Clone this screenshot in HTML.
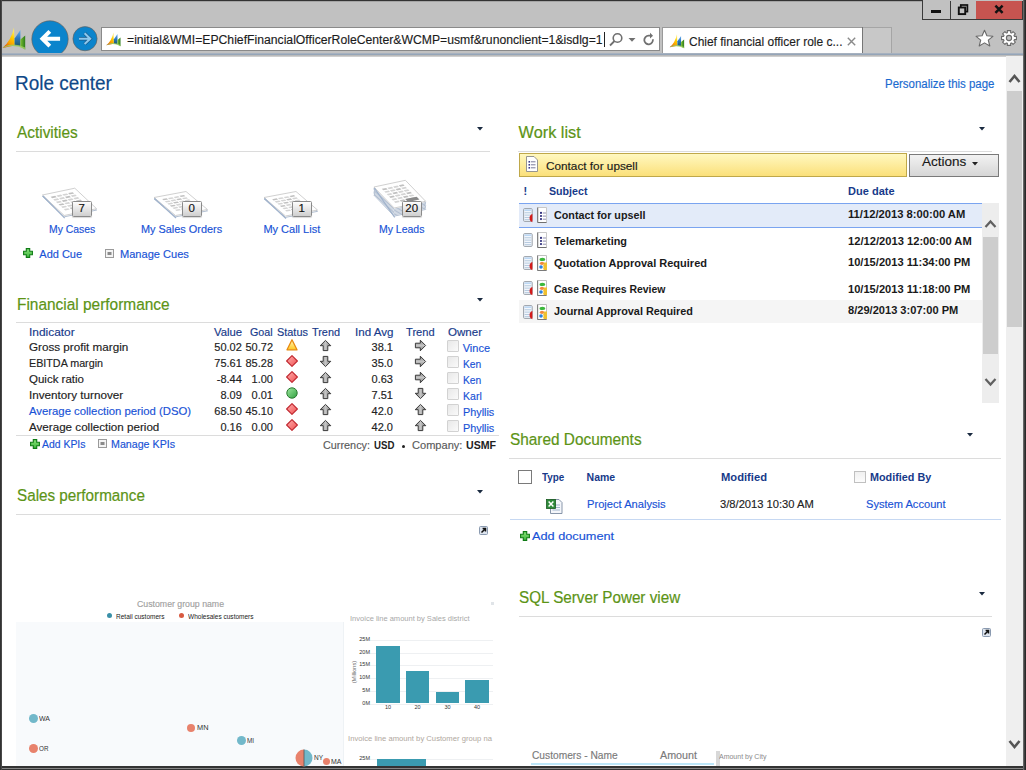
<!DOCTYPE html><html><head><meta charset="utf-8"><style>
html,body{margin:0;padding:0;width:1026px;height:770px;overflow:hidden;background:#fff;font-family:"Liberation Sans",sans-serif;}
.r{position:absolute;}
.t{position:absolute;white-space:nowrap;transform-origin:0 0;}
svg.r{overflow:visible}
</style></head><body>
<div class="r" style="left:0px;top:0px;width:1026px;height:56px;background:#c1c1c1"></div>
<div class="r" style="left:0px;top:0px;width:1026px;height:1px;background:#333"></div>
<div class="r" style="left:0px;top:1px;width:1026px;height:1px;background:#8a8a8a;opacity:0.5"></div>
<div class="r" style="left:0px;top:0px;width:2px;height:770px;background:#3a3a3a"></div>
<div class="r" style="left:1023px;top:0px;width:3px;height:770px;background:linear-gradient(90deg,#7a7a7a,#333 60%,#222)"></div>
<div class="r" style="left:0px;top:766px;width:1026px;height:4px;background:#333"></div>
<div class="r" style="left:0px;top:768px;width:1026px;height:1px;background:#858585"></div>
<div class="r" style="left:922px;top:0px;width:101px;height:20px;background:#c1c1c1;border:1px solid #3a3a3a;border-top:none;border-right:none;box-sizing:border-box"></div>
<div class="r" style="left:976px;top:1px;width:47px;height:19px;background:#c75450;border-bottom:1px solid #3a3a3a;box-sizing:border-box"></div>
<div class="r" style="left:950px;top:1px;width:1px;height:19px;background:#3a3a3a"></div>
<div class="r" style="left:1022px;top:1px;width:1px;height:19px;background:#3a3a3a"></div>
<div class="r" style="left:931px;top:10px;width:10px;height:3px;background:#111"></div>
<svg class="r" style="left:955px;top:2px" width="16" height="14" viewBox="0 0 16 14"><rect x="5.8" y="3" width="6.6" height="6.6" fill="none" stroke="#111" stroke-width="1.7"/><rect x="3.8" y="5.5" width="6.4" height="6.6" fill="#c1c1c1" stroke="#111" stroke-width="1.9"/><rect x="5.6" y="7.3" width="2.8" height="3" fill="#c1c1c1"/></svg>
<svg class="r" style="left:992px;top:3px" width="14" height="12" viewBox="0 0 14 12"><path d="M3.4 2.6 L10.6 9.8 M10.6 2.6 L3.4 9.8" stroke="#111" stroke-width="2.5"/></svg>
<svg class="r" style="left:2px;top:27px" width="24" height="22" viewBox="0 0 24 22"><defs><linearGradient id="gya" x1="0" y1="1" x2="0.5" y2="0"><stop offset="0" stop-color="#d42a10"/><stop offset="0.4" stop-color="#f89a00"/><stop offset="0.75" stop-color="#ffd000"/><stop offset="1" stop-color="#ffe860"/></linearGradient>
<linearGradient id="gba" x1="0" y1="1" x2="0" y2="0"><stop offset="0" stop-color="#1e5a68"/><stop offset="0.5" stop-color="#2a78c0"/><stop offset="1" stop-color="#6ab0f0"/></linearGradient>
<linearGradient id="gga" x1="0" y1="0" x2="1" y2="0"><stop offset="0" stop-color="#7cc030"/><stop offset="1" stop-color="#2a7a1a"/></linearGradient></defs>
<path d="M0.5 21 Q9 14 12 0.5 L12.6 18.5 Z" fill="url(#gya)"/>
<path d="M12.6 11.5 L18.4 3 L18.4 19.3 L12.6 18.5 Z" fill="url(#gba)"/>
<path d="M18.4 12.5 L23.2 8.5 L23.2 22.5 L18.4 19.5 Z" fill="url(#gga)"/>
<path d="M1 21 Q12 16.5 23.2 22.5 L23.2 20.5 Q12 14.8 1.5 19.8 Z" fill="#9ccc60" opacity="0.85"/></svg>
<svg class="r" style="left:30px;top:19px" width="40" height="35" viewBox="0 0 40 35"><circle cx="20" cy="20" r="18.2" fill="#0b84cc" stroke="#6a5a50" stroke-width="0.6"/><path d="M30.1 19.7 L13 19.7 M19.8 12.3 L12.4 19.7 L19.8 27.1" fill="none" stroke="#fff" stroke-width="4" stroke-linejoin="miter"/></svg>
<svg class="r" style="left:72px;top:26px" width="26" height="26" viewBox="0 0 26 26"><circle cx="13" cy="12.7" r="12.1" fill="#0b84cc" stroke="#6a5a50" stroke-width="0.6"/><path d="M7 12.7 L17.8 12.7 M12.6 7.3 L18.2 12.7 L12.6 18.1" fill="none" stroke="#1a5a8a" stroke-width="3.4"/><path d="M7 12.7 L17.8 12.7 M12.6 7.3 L18.2 12.7 L12.6 18.1" fill="none" stroke="#8cc8ee" stroke-width="2.1"/></svg>
<div class="r" style="left:101px;top:27px;width:559px;height:24px;background:#fff;border:1px solid #8a8a8a;box-sizing:border-box"></div>
<svg class="r" style="left:106px;top:32px" width="15" height="14" viewBox="0 0 24 22"><defs><linearGradient id="gyb" x1="0" y1="1" x2="0.5" y2="0"><stop offset="0" stop-color="#d42a10"/><stop offset="0.4" stop-color="#f89a00"/><stop offset="0.75" stop-color="#ffd000"/><stop offset="1" stop-color="#ffe860"/></linearGradient>
<linearGradient id="gbb" x1="0" y1="1" x2="0" y2="0"><stop offset="0" stop-color="#1e5a68"/><stop offset="0.5" stop-color="#2a78c0"/><stop offset="1" stop-color="#6ab0f0"/></linearGradient>
<linearGradient id="ggb" x1="0" y1="0" x2="1" y2="0"><stop offset="0" stop-color="#7cc030"/><stop offset="1" stop-color="#2a7a1a"/></linearGradient></defs>
<path d="M0.5 21 Q9 14 12 0.5 L12.6 18.5 Z" fill="url(#gyb)"/>
<path d="M12.6 11.5 L18.4 3 L18.4 19.3 L12.6 18.5 Z" fill="url(#gbb)"/>
<path d="M18.4 12.5 L23.2 8.5 L23.2 22.5 L18.4 19.5 Z" fill="url(#ggb)"/>
<path d="M1 21 Q12 16.5 23.2 22.5 L23.2 20.5 Q12 14.8 1.5 19.8 Z" fill="#9ccc60" opacity="0.85"/></svg>
<div class="t" style="left:126.50px;top:34.22px;font-size:12.5px;line-height:12.5px;color:#1c1c1c;-webkit-text-stroke:0.15px #1c1c1c;transform:scaleX(0.9762);">=initial&amp;WMI=EPChiefFinancialOfficerRoleCenter&amp;WCMP=usmf&amp;runonclient=1&amp;isdlg=1</div>
<div class="r" style="left:604px;top:32px;width:1px;height:15px;background:#222"></div>
<svg class="r" style="left:608px;top:31px" width="56" height="18" viewBox="0 0 56 18"><circle cx="9.5" cy="7" r="4.3" fill="none" stroke="#707070" stroke-width="1.6"/><path d="M6.5 10 L2 14.5" stroke="#707070" stroke-width="1.8"/><path d="M20.5 7 L27.5 7 L24 10.7 Z" fill="#707070"/><path d="M44.83 8.25 A4.3 4.3 0 1 1 40.6 4.7 L42.5 4.7" fill="none" stroke="#707070" stroke-width="1.8"/><path d="M42 1.8 L45 4.7 L42 7.6 Z" fill="#707070"/></svg>
<div class="r" style="left:662px;top:27px;width:201px;height:29px;background:#fff;border:1px solid #9a9a9a;border-bottom:none;box-sizing:border-box"></div>
<svg class="r" style="left:669px;top:34px" width="16" height="14" viewBox="0 0 24 22"><defs><linearGradient id="gyc" x1="0" y1="1" x2="0.5" y2="0"><stop offset="0" stop-color="#d42a10"/><stop offset="0.4" stop-color="#f89a00"/><stop offset="0.75" stop-color="#ffd000"/><stop offset="1" stop-color="#ffe860"/></linearGradient>
<linearGradient id="gbc" x1="0" y1="1" x2="0" y2="0"><stop offset="0" stop-color="#1e5a68"/><stop offset="0.5" stop-color="#2a78c0"/><stop offset="1" stop-color="#6ab0f0"/></linearGradient>
<linearGradient id="ggc" x1="0" y1="0" x2="1" y2="0"><stop offset="0" stop-color="#7cc030"/><stop offset="1" stop-color="#2a7a1a"/></linearGradient></defs>
<path d="M0.5 21 Q9 14 12 0.5 L12.6 18.5 Z" fill="url(#gyc)"/>
<path d="M12.6 11.5 L18.4 3 L18.4 19.3 L12.6 18.5 Z" fill="url(#gbc)"/>
<path d="M18.4 12.5 L23.2 8.5 L23.2 22.5 L18.4 19.5 Z" fill="url(#ggc)"/>
<path d="M1 21 Q12 16.5 23.2 22.5 L23.2 20.5 Q12 14.8 1.5 19.8 Z" fill="#9ccc60" opacity="0.85"/></svg>
<div class="t" style="left:689.00px;top:34.99px;font-size:13px;line-height:13px;color:#1e1e1e;-webkit-text-stroke:0.15px #1e1e1e;transform:scaleX(0.9208);">Chief financial officer role c...</div>
<svg class="r" style="left:846px;top:36px" width="12" height="11" viewBox="0 0 12 11"><path d="M1.8 1.8 L9.2 9.2 M9.2 1.8 L1.8 9.2" stroke="#8a8a8a" stroke-width="1.4"/></svg>
<div class="r" style="left:862px;top:27px;width:30px;height:27px;background:#c8c8c8;border:1px solid #a5a5a5;border-left:none;box-sizing:border-box"></div>
<div class="r" style="left:862px;top:27px;width:1px;height:27px;background:#767676"></div>
<svg class="r" style="left:975px;top:29px" width="20" height="18" viewBox="0 0 20 18"><path d="M9.5 1.2 L11.9 6.8 L17.9 7.3 L13.3 11.2 L14.8 17 L9.5 13.9 L4.2 17 L5.7 11.2 L1.1 7.3 L7.1 6.8 Z" fill="#fff" stroke="#6a6a6a" stroke-width="1.1" stroke-linejoin="round"/></svg>
<svg class="r" style="left:999px;top:28px" width="20" height="20" viewBox="0 0 20 20"><path d="M15.35 8.35 L17.42 8.34 L17.42 11.66 L15.35 11.65 L14.95 12.61 L16.42 14.07 L14.07 16.42 L12.61 14.95 L11.65 15.35 L11.66 17.42 L8.34 17.42 L8.35 15.35 L7.39 14.95 L5.93 16.42 L3.58 14.07 L5.05 12.61 L4.65 11.65 L2.58 11.66 L2.58 8.34 L4.65 8.35 L5.05 7.39 L3.58 5.93 L5.93 3.58 L7.39 5.05 L8.35 4.65 L8.34 2.58 L11.66 2.58 L11.65 4.65 L12.61 5.05 L14.07 3.58 L16.42 5.93 L14.95 7.39 Z" fill="#fff" stroke="#6a6a6a" stroke-width="1.1" stroke-linejoin="round"/><circle cx="10" cy="10" r="2.6" fill="#c3c3c3" stroke="#6a6a6a" stroke-width="1.1"/></svg>
<div class="r" style="left:0px;top:53px;width:1026px;height:1px;background:#a6b1bf"></div>
<div class="r" style="left:0px;top:54px;width:1026px;height:1px;background:#95a5b8"></div>
<div class="r" style="left:0px;top:55px;width:1026px;height:2px;background:linear-gradient(#b0b0b0,#d8d8d8)"></div>
<div class="r" style="left:0px;top:0px;width:2px;height:770px;background:linear-gradient(90deg,#333 60%,#6a6a6a)"></div>
<div class="r" style="left:1023px;top:0px;width:3px;height:770px;background:linear-gradient(90deg,#7a7a7a,#333 60%,#222)"></div>
<div class="r" style="left:2px;top:57px;width:1021px;height:709px;background:#fff"></div>
<div class="t" style="left:14.80px;top:74.12px;font-size:19.7px;line-height:19.7px;color:#0f4888;-webkit-text-stroke:0.2px #0f4888;transform:scaleX(0.9623);">Role center</div>
<div class="t" style="left:884.60px;top:77.54px;font-size:12px;line-height:12px;color:#1a6ad0;-webkit-text-stroke:0.15px #1a6ad0;transform:scaleX(0.9538);">Personalize this page</div>
<div class="t" style="left:16.60px;top:124.20px;font-size:16.3px;line-height:16.3px;color:#5c9416;-webkit-text-stroke:0.2px #5c9416;transform:scaleX(0.9456);">Activities</div>
<div class="r" style="left:16px;top:151px;width:474px;height:1px;background:#dcdcdc"></div>
<svg class="r" style="left:477px;top:127px" width="6" height="4" viewBox="0 0 6 4"><path d="M0 0 L6 0 L3 3.5 Z" fill="#1a2a40"/></svg>
<div class="t" style="left:16.60px;top:295.60px;font-size:16.3px;line-height:16.3px;color:#5c9416;-webkit-text-stroke:0.2px #5c9416;transform:scaleX(0.9473);">Financial performance</div>
<div class="r" style="left:16px;top:322px;width:474px;height:1px;background:#dcdcdc"></div>
<svg class="r" style="left:477px;top:298px" width="6" height="4" viewBox="0 0 6 4"><path d="M0 0 L6 0 L3 3.5 Z" fill="#1a2a40"/></svg>
<div class="t" style="left:16.60px;top:487.00px;font-size:16.3px;line-height:16.3px;color:#5c9416;-webkit-text-stroke:0.2px #5c9416;transform:scaleX(0.9357);">Sales performance</div>
<div class="r" style="left:16px;top:514px;width:474px;height:1px;background:#dcdcdc"></div>
<svg class="r" style="left:477px;top:490px" width="6" height="4" viewBox="0 0 6 4"><path d="M0 0 L6 0 L3 3.5 Z" fill="#1a2a40"/></svg>
<div class="t" style="left:518.60px;top:123.90px;font-size:16.3px;line-height:16.3px;color:#5c9416;-webkit-text-stroke:0.2px #5c9416;">Work list</div>
<div class="r" style="left:518px;top:151px;width:474px;height:1px;background:#dcdcdc"></div>
<svg class="r" style="left:979px;top:127px" width="6" height="4" viewBox="0 0 6 4"><path d="M0 0 L6 0 L3 3.5 Z" fill="#1a2a40"/></svg>
<div class="t" style="left:509.60px;top:431.00px;font-size:16.3px;line-height:16.3px;color:#5c9416;-webkit-text-stroke:0.2px #5c9416;transform:scaleX(0.9441);">Shared Documents</div>
<div class="r" style="left:509px;top:458px;width:492px;height:1px;background:#dcdcdc"></div>
<svg class="r" style="left:967px;top:433px" width="6" height="4" viewBox="0 0 6 4"><path d="M0 0 L6 0 L3 3.5 Z" fill="#1a2a40"/></svg>
<div class="t" style="left:519.00px;top:589.10px;font-size:16.3px;line-height:16.3px;color:#5c9416;-webkit-text-stroke:0.2px #5c9416;transform:scaleX(0.9357);">SQL Server Power view</div>
<div class="r" style="left:519px;top:616px;width:473px;height:1px;background:#dcdcdc"></div>
<svg class="r" style="left:979px;top:592px" width="6" height="4" viewBox="0 0 6 4"><path d="M0 0 L6 0 L3 3.5 Z" fill="#1a2a40"/></svg>
<svg class="r" style="left:300px;top:160px" width="140" height="70" viewBox="0 0 140 70"><g transform="translate(0 1.35)"><path d="M0 0 H100 V100 H0 Z" transform="matrix(0.3240 -0.0680 0.2180 0.2050 -257.60 35.00)" fill="#fdfdfd" stroke="#a9b8cc" stroke-width="0.9" vector-effect="non-scaling-stroke"/></g><g transform="matrix(0.3240 -0.0680 0.2180 0.2050 -257.60 35.00)"><path d="M0 0 H100 V100 H0 Z" fill="#fff" stroke="#c4c4c4" stroke-width="0.8" vector-effect="non-scaling-stroke"/><rect x="16" y="14" width="14" height="7" fill="#c0c0c0"/><rect x="34" y="14" width="14" height="7" fill="#d4d4d4"/><rect x="52" y="14" width="14" height="7" fill="#d4d4d4"/><rect x="70" y="14" width="14" height="7" fill="#c0c0c0"/><rect x="16" y="26" width="14" height="7" fill="#d4d4d4"/><rect x="34" y="26" width="14" height="7" fill="#d4d4d4"/><rect x="52" y="26" width="14" height="7" fill="#c0c0c0"/><rect x="70" y="26" width="14" height="7" fill="#d4d4d4"/><rect x="16" y="38" width="14" height="7" fill="#d4d4d4"/><rect x="34" y="38" width="14" height="7" fill="#c0c0c0"/><rect x="52" y="38" width="14" height="7" fill="#d4d4d4"/><rect x="70" y="38" width="14" height="7" fill="#d4d4d4"/><rect x="16" y="50" width="14" height="7" fill="#c0c0c0"/><rect x="34" y="50" width="14" height="7" fill="#d4d4d4"/><rect x="52" y="50" width="14" height="7" fill="#d4d4d4"/><rect x="70" y="50" width="14" height="7" fill="#c0c0c0"/><rect x="16" y="62" width="14" height="7" fill="#d4d4d4"/><rect x="34" y="62" width="14" height="7" fill="#d4d4d4"/><rect x="52" y="62" width="14" height="7" fill="#c0c0c0"/><rect x="70" y="62" width="14" height="7" fill="#d4d4d4"/><rect x="16" y="74" width="14" height="7" fill="#d4d4d4"/><rect x="34" y="74" width="14" height="7" fill="#c0c0c0"/><rect x="52" y="74" width="14" height="7" fill="#d4d4d4"/><rect x="70" y="74" width="14" height="7" fill="#d4d4d4"/></g><path d="M-257.10 36.00 L-235.30 58.05" stroke="#9fb2cc" stroke-width="1.2"/></svg>
<div class="r" style="left:71.5px;top:201px;width:20.5px;height:15.5px;background:linear-gradient(#fdfdfd,#cfcfcf);border:1px solid #8a8a8a;box-sizing:border-box;border-radius:1.5px;box-shadow:0 1px 1px rgba(0,0,0,0.15)"></div>
<div class="t" style="left:78.55px;top:203.46px;font-size:11.5px;line-height:11.5px;color:#111;-webkit-text-stroke:0.15px #111;">7</div>
<svg class="r" style="left:300px;top:160px" width="140" height="70" viewBox="0 0 140 70"><g transform="translate(0 1.35)"><path d="M0 0 H100 V100 H0 Z" transform="matrix(0.3200 -0.0600 0.2150 0.1800 -146.00 37.50)" fill="#fdfdfd" stroke="#a9b8cc" stroke-width="0.9" vector-effect="non-scaling-stroke"/></g><g transform="matrix(0.3200 -0.0600 0.2150 0.1800 -146.00 37.50)"><path d="M0 0 H100 V100 H0 Z" fill="#fff" stroke="#c4c4c4" stroke-width="0.8" vector-effect="non-scaling-stroke"/><rect x="16" y="14" width="14" height="7" fill="#c0c0c0"/><rect x="34" y="14" width="14" height="7" fill="#d4d4d4"/><rect x="52" y="14" width="14" height="7" fill="#d4d4d4"/><rect x="70" y="14" width="14" height="7" fill="#c0c0c0"/><rect x="16" y="26" width="14" height="7" fill="#d4d4d4"/><rect x="34" y="26" width="14" height="7" fill="#d4d4d4"/><rect x="52" y="26" width="14" height="7" fill="#c0c0c0"/><rect x="70" y="26" width="14" height="7" fill="#d4d4d4"/><rect x="16" y="38" width="14" height="7" fill="#d4d4d4"/><rect x="34" y="38" width="14" height="7" fill="#c0c0c0"/><rect x="52" y="38" width="14" height="7" fill="#d4d4d4"/><rect x="70" y="38" width="14" height="7" fill="#d4d4d4"/><rect x="16" y="50" width="14" height="7" fill="#c0c0c0"/><rect x="34" y="50" width="14" height="7" fill="#d4d4d4"/><rect x="52" y="50" width="14" height="7" fill="#d4d4d4"/><rect x="70" y="50" width="14" height="7" fill="#c0c0c0"/><rect x="16" y="62" width="14" height="7" fill="#d4d4d4"/><rect x="34" y="62" width="14" height="7" fill="#d4d4d4"/><rect x="52" y="62" width="14" height="7" fill="#c0c0c0"/><rect x="70" y="62" width="14" height="7" fill="#d4d4d4"/><rect x="16" y="74" width="14" height="7" fill="#d4d4d4"/><rect x="34" y="74" width="14" height="7" fill="#c0c0c0"/><rect x="52" y="74" width="14" height="7" fill="#d4d4d4"/><rect x="70" y="74" width="14" height="7" fill="#d4d4d4"/></g><path d="M-145.50 38.50 L-124.00 58.05" stroke="#9fb2cc" stroke-width="1.2"/></svg>
<div class="r" style="left:181.5px;top:201px;width:20.5px;height:15.5px;background:linear-gradient(#fdfdfd,#cfcfcf);border:1px solid #8a8a8a;box-sizing:border-box;border-radius:1.5px;box-shadow:0 1px 1px rgba(0,0,0,0.15)"></div>
<div class="t" style="left:188.55px;top:203.46px;font-size:11.5px;line-height:11.5px;color:#111;-webkit-text-stroke:0.15px #111;">0</div>
<svg class="r" style="left:300px;top:160px" width="140" height="70" viewBox="0 0 140 70"><g transform="translate(0 1.35)"><path d="M0 0 H100 V100 H0 Z" transform="matrix(0.3200 -0.0600 0.2150 0.1850 -36.00 37.50)" fill="#fdfdfd" stroke="#a9b8cc" stroke-width="0.9" vector-effect="non-scaling-stroke"/></g><g transform="matrix(0.3200 -0.0600 0.2150 0.1850 -36.00 37.50)"><path d="M0 0 H100 V100 H0 Z" fill="#fff" stroke="#c4c4c4" stroke-width="0.8" vector-effect="non-scaling-stroke"/><rect x="16" y="14" width="14" height="7" fill="#c0c0c0"/><rect x="34" y="14" width="14" height="7" fill="#d4d4d4"/><rect x="52" y="14" width="14" height="7" fill="#d4d4d4"/><rect x="70" y="14" width="14" height="7" fill="#c0c0c0"/><rect x="16" y="26" width="14" height="7" fill="#d4d4d4"/><rect x="34" y="26" width="14" height="7" fill="#d4d4d4"/><rect x="52" y="26" width="14" height="7" fill="#c0c0c0"/><rect x="70" y="26" width="14" height="7" fill="#d4d4d4"/><rect x="16" y="38" width="14" height="7" fill="#d4d4d4"/><rect x="34" y="38" width="14" height="7" fill="#c0c0c0"/><rect x="52" y="38" width="14" height="7" fill="#d4d4d4"/><rect x="70" y="38" width="14" height="7" fill="#d4d4d4"/><rect x="16" y="50" width="14" height="7" fill="#c0c0c0"/><rect x="34" y="50" width="14" height="7" fill="#d4d4d4"/><rect x="52" y="50" width="14" height="7" fill="#d4d4d4"/><rect x="70" y="50" width="14" height="7" fill="#c0c0c0"/><rect x="16" y="62" width="14" height="7" fill="#d4d4d4"/><rect x="34" y="62" width="14" height="7" fill="#d4d4d4"/><rect x="52" y="62" width="14" height="7" fill="#c0c0c0"/><rect x="70" y="62" width="14" height="7" fill="#d4d4d4"/><rect x="16" y="74" width="14" height="7" fill="#d4d4d4"/><rect x="34" y="74" width="14" height="7" fill="#c0c0c0"/><rect x="52" y="74" width="14" height="7" fill="#d4d4d4"/><rect x="70" y="74" width="14" height="7" fill="#d4d4d4"/></g><path d="M-35.50 38.50 L-14.00 58.55" stroke="#9fb2cc" stroke-width="1.2"/></svg>
<div class="r" style="left:291.5px;top:201px;width:20.5px;height:15.5px;background:linear-gradient(#fdfdfd,#cfcfcf);border:1px solid #8a8a8a;box-sizing:border-box;border-radius:1.5px;box-shadow:0 1px 1px rgba(0,0,0,0.15)"></div>
<div class="t" style="left:298.55px;top:203.46px;font-size:11.5px;line-height:11.5px;color:#111;-webkit-text-stroke:0.15px #111;">1</div>
<svg class="r" style="left:300px;top:160px" width="140" height="70" viewBox="0 0 140 70"><g transform="translate(0 8.100000000000001)"><path d="M0 0 H100 V100 H0 Z" transform="matrix(0.3150 -0.0670 0.2030 0.2100 73.90 27.00)" fill="#fdfdfd" stroke="#a9b8cc" stroke-width="0.9" vector-effect="non-scaling-stroke"/></g><g transform="translate(0 6.75)"><path d="M0 0 H100 V100 H0 Z" transform="matrix(0.3150 -0.0670 0.2030 0.2100 73.90 27.00)" fill="#fdfdfd" stroke="#a9b8cc" stroke-width="0.9" vector-effect="non-scaling-stroke"/></g><g transform="translate(0 5.4)"><path d="M0 0 H100 V100 H0 Z" transform="matrix(0.3150 -0.0670 0.2030 0.2100 73.90 27.00)" fill="#fdfdfd" stroke="#a9b8cc" stroke-width="0.9" vector-effect="non-scaling-stroke"/></g><g transform="translate(0 4.050000000000001)"><path d="M0 0 H100 V100 H0 Z" transform="matrix(0.3150 -0.0670 0.2030 0.2100 73.90 27.00)" fill="#fdfdfd" stroke="#a9b8cc" stroke-width="0.9" vector-effect="non-scaling-stroke"/></g><g transform="translate(0 2.7)"><path d="M0 0 H100 V100 H0 Z" transform="matrix(0.3150 -0.0670 0.2030 0.2100 73.90 27.00)" fill="#fdfdfd" stroke="#a9b8cc" stroke-width="0.9" vector-effect="non-scaling-stroke"/></g><g transform="translate(0 1.35)"><path d="M0 0 H100 V100 H0 Z" transform="matrix(0.3150 -0.0670 0.2030 0.2100 73.90 27.00)" fill="#fdfdfd" stroke="#a9b8cc" stroke-width="0.9" vector-effect="non-scaling-stroke"/></g><g transform="matrix(0.3150 -0.0670 0.2030 0.2100 73.90 27.00)"><path d="M0 0 H100 V100 H0 Z" fill="#fff" stroke="#c4c4c4" stroke-width="0.8" vector-effect="non-scaling-stroke"/><rect x="16" y="14" width="14" height="7" fill="#c0c0c0"/><rect x="34" y="14" width="14" height="7" fill="#d4d4d4"/><rect x="52" y="14" width="14" height="7" fill="#d4d4d4"/><rect x="70" y="14" width="14" height="7" fill="#c0c0c0"/><rect x="16" y="26" width="14" height="7" fill="#d4d4d4"/><rect x="34" y="26" width="14" height="7" fill="#d4d4d4"/><rect x="52" y="26" width="14" height="7" fill="#c0c0c0"/><rect x="70" y="26" width="14" height="7" fill="#d4d4d4"/><rect x="16" y="38" width="14" height="7" fill="#d4d4d4"/><rect x="34" y="38" width="14" height="7" fill="#c0c0c0"/><rect x="52" y="38" width="14" height="7" fill="#d4d4d4"/><rect x="70" y="38" width="14" height="7" fill="#d4d4d4"/><rect x="16" y="50" width="14" height="7" fill="#c0c0c0"/><rect x="34" y="50" width="14" height="7" fill="#d4d4d4"/><rect x="52" y="50" width="14" height="7" fill="#d4d4d4"/><rect x="70" y="50" width="14" height="7" fill="#c0c0c0"/><rect x="16" y="62" width="14" height="7" fill="#d4d4d4"/><rect x="34" y="62" width="14" height="7" fill="#d4d4d4"/><rect x="52" y="62" width="14" height="7" fill="#c0c0c0"/><rect x="70" y="62" width="14" height="7" fill="#d4d4d4"/><rect x="16" y="74" width="14" height="7" fill="#d4d4d4"/><rect x="34" y="74" width="14" height="7" fill="#c0c0c0"/><rect x="52" y="74" width="14" height="7" fill="#d4d4d4"/><rect x="70" y="74" width="14" height="7" fill="#d4d4d4"/><rect x="52" y="74" width="36" height="14" fill="#8a8a8a"/></g><path d="M74.40 28.00 L94.70 57.30" stroke="#9fb2cc" stroke-width="1.2"/></svg>
<div class="r" style="left:401.5px;top:201px;width:20.5px;height:15.5px;background:linear-gradient(#fdfdfd,#cfcfcf);border:1px solid #8a8a8a;box-sizing:border-box;border-radius:1.5px;box-shadow:0 1px 1px rgba(0,0,0,0.15)"></div>
<div class="t" style="left:405.35px;top:203.46px;font-size:11.5px;line-height:11.5px;color:#111;-webkit-text-stroke:0.15px #111;">20</div>
<div class="t" style="left:48.50px;top:223.99px;font-size:11px;line-height:11px;color:#1852d6;-webkit-text-stroke:0.15px #1852d6;transform:scaleX(0.9448);">My Cases</div>
<div class="t" style="left:140.60px;top:223.99px;font-size:11px;line-height:11px;color:#1852d6;-webkit-text-stroke:0.15px #1852d6;transform:scaleX(0.9902);">My Sales Orders</div>
<div class="t" style="left:263.40px;top:223.99px;font-size:11px;line-height:11px;color:#1852d6;-webkit-text-stroke:0.15px #1852d6;">My Call List</div>
<div class="t" style="left:379.00px;top:223.99px;font-size:11px;line-height:11px;color:#1852d6;-webkit-text-stroke:0.15px #1852d6;transform:scaleX(0.9518);">My Leads</div>
<svg class="r" style="left:23px;top:248px" width="10" height="10" viewBox="0 0 10 10"><defs><linearGradient id="pg" x1="0" y1="0" x2="0" y2="1"><stop offset="0" stop-color="#8ae07a"/><stop offset="1" stop-color="#3cb83c"/></linearGradient></defs><path d="M3.3 0.6 H6.7 V3.3 H9.4 V6.7 H6.7 V9.4 H3.3 V6.7 H0.6 V3.3 H3.3 Z" fill="url(#pg)" stroke="#0e7a14" stroke-width="1.1"/></svg>
<div class="t" style="left:39.30px;top:248.69px;font-size:11px;line-height:11px;color:#1852d6;-webkit-text-stroke:0.15px #1852d6;">Add Cue</div>
<svg class="r" style="left:105px;top:249px" width="9" height="9" viewBox="0 0 9 9"><rect x="0.5" y="0.5" width="8" height="8" fill="#f4f4f4" stroke="#9a9a9a"/><rect x="2.5" y="3" width="4" height="3" fill="#8a8a8a"/></svg>
<div class="t" style="left:120.40px;top:248.69px;font-size:11px;line-height:11px;color:#1852d6;-webkit-text-stroke:0.15px #1852d6;transform:scaleX(1.0058);">Manage Cues</div>
<div class="t" style="left:29.40px;top:326.59px;font-size:11px;line-height:11px;color:#173a8a;-webkit-text-stroke:0.15px #173a8a;transform:scaleX(1.0829);">Indicator</div>
<div class="t" style="left:213.70px;top:326.59px;font-size:11px;line-height:11px;color:#173a8a;-webkit-text-stroke:0.15px #173a8a;transform:scaleX(1.0293);">Value</div>
<div class="t" style="left:249.90px;top:326.59px;font-size:11px;line-height:11px;color:#173a8a;-webkit-text-stroke:0.15px #173a8a;transform:scaleX(0.9741);">Goal</div>
<div class="t" style="left:276.70px;top:326.59px;font-size:11px;line-height:11px;color:#173a8a;-webkit-text-stroke:0.15px #173a8a;transform:scaleX(0.9904);">Status</div>
<div class="t" style="left:312.00px;top:326.59px;font-size:11px;line-height:11px;color:#173a8a;-webkit-text-stroke:0.15px #173a8a;transform:scaleX(0.9894);">Trend</div>
<div class="t" style="left:354.50px;top:326.59px;font-size:11px;line-height:11px;color:#173a8a;-webkit-text-stroke:0.15px #173a8a;transform:scaleX(1.0548);">Ind Avg</div>
<div class="t" style="left:406.40px;top:326.59px;font-size:11px;line-height:11px;color:#173a8a;-webkit-text-stroke:0.15px #173a8a;transform:scaleX(1.0106);">Trend</div>
<div class="t" style="left:448.00px;top:326.59px;font-size:11px;line-height:11px;color:#173a8a;-webkit-text-stroke:0.15px #173a8a;transform:scaleX(1.0494);">Owner</div>
<div class="t" style="left:29.40px;top:341.89px;font-size:11px;line-height:11px;color:#222;-webkit-text-stroke:0.15px #222;transform:scaleX(1.0610);">Gross profit margin</div>
<div class="t" style="left:214.28px;top:341.89px;font-size:11px;line-height:11px;color:#222;-webkit-text-stroke:0.15px #222;">50.02</div>
<div class="t" style="left:245.47px;top:341.89px;font-size:11px;line-height:11px;color:#222;-webkit-text-stroke:0.15px #222;">50.72</div>
<svg class="r" style="left:285.6px;top:339.4px" width="12" height="12" viewBox="0 0 12 12"><defs><linearGradient id="tg" x1="0" y1="0" x2="0" y2="1"><stop offset="0" stop-color="#fff8c0"/><stop offset="1" stop-color="#ffc820"/></linearGradient></defs><path d="M6 0.8 L11 10.8 L1 10.8 Z" fill="url(#tg)" stroke="#e88a10" stroke-width="1.3" stroke-linejoin="round"/></svg>
<svg class="r" style="left:320.1px;top:339.8px" width="11" height="11" viewBox="0 0 11 11"><defs><linearGradient id="ag" x1="0" y1="0" x2="1" y2="0"><stop offset="0" stop-color="#888"/><stop offset="0.5" stop-color="#c4c4c4"/><stop offset="1" stop-color="#808080"/></linearGradient></defs><path d="M5.5 0.4 L10.8 5.7 L7.8 5.7 L7.8 10.6 L3.2 10.6 L3.2 5.7 L0.2 5.7 Z"  fill="url(#ag)" stroke="#3a3a3a" stroke-width="1" stroke-linejoin="miter"/></svg>
<div class="t" style="left:371.59px;top:342.49px;font-size:11px;line-height:11px;color:#222;-webkit-text-stroke:0.15px #222;">38.1</div>
<svg class="r" style="left:415.0px;top:339.8px" width="11" height="11" viewBox="0 0 11 11"><defs><linearGradient id="ag" x1="0" y1="0" x2="1" y2="0"><stop offset="0" stop-color="#888"/><stop offset="0.5" stop-color="#c4c4c4"/><stop offset="1" stop-color="#808080"/></linearGradient></defs><path d="M5.5 0.4 L10.8 5.7 L7.8 5.7 L7.8 10.6 L3.2 10.6 L3.2 5.7 L0.2 5.7 Z" transform="rotate(90 5.5 5.5)" fill="url(#ag)" stroke="#3a3a3a" stroke-width="1" stroke-linejoin="miter"/></svg>
<div class="r" style="left:447px;top:340px;width:12px;height:12px;background:linear-gradient(135deg,#e8e8e8,#fafafa);border:1px solid #d2d2d2;box-sizing:border-box;border-radius:1px"></div>
<div class="t" style="left:462.70px;top:342.69px;font-size:11px;line-height:11px;color:#1852d6;-webkit-text-stroke:0.15px #1852d6;">Vince</div>
<div class="t" style="left:29.40px;top:357.89px;font-size:11px;line-height:11px;color:#222;-webkit-text-stroke:0.15px #222;transform:scaleX(0.9763);">EBITDA margin</div>
<div class="t" style="left:214.28px;top:357.89px;font-size:11px;line-height:11px;color:#222;-webkit-text-stroke:0.15px #222;">75.61</div>
<div class="t" style="left:245.47px;top:357.89px;font-size:11px;line-height:11px;color:#222;-webkit-text-stroke:0.15px #222;">85.28</div>
<svg class="r" style="left:285.6px;top:355.4px" width="12" height="12" viewBox="0 0 12 12"><defs><linearGradient id="dg" x1="0" y1="0" x2="1" y2="1"><stop offset="0" stop-color="#ffb0b0"/><stop offset="1" stop-color="#f05050"/></linearGradient></defs><path d="M6 0.6 L11.4 6 L6 11.4 L0.6 6 Z" fill="url(#dg)" stroke="#c02830" stroke-width="1.1" stroke-linejoin="round"/></svg>
<svg class="r" style="left:320.1px;top:355.8px" width="11" height="11" viewBox="0 0 11 11"><defs><linearGradient id="ag" x1="0" y1="0" x2="1" y2="0"><stop offset="0" stop-color="#888"/><stop offset="0.5" stop-color="#c4c4c4"/><stop offset="1" stop-color="#808080"/></linearGradient></defs><path d="M5.5 0.4 L10.8 5.7 L7.8 5.7 L7.8 10.6 L3.2 10.6 L3.2 5.7 L0.2 5.7 Z" transform="rotate(180 5.5 5.5)" fill="url(#ag)" stroke="#3a3a3a" stroke-width="1" stroke-linejoin="miter"/></svg>
<div class="t" style="left:371.59px;top:358.49px;font-size:11px;line-height:11px;color:#222;-webkit-text-stroke:0.15px #222;">35.0</div>
<svg class="r" style="left:415.0px;top:355.8px" width="11" height="11" viewBox="0 0 11 11"><defs><linearGradient id="ag" x1="0" y1="0" x2="1" y2="0"><stop offset="0" stop-color="#888"/><stop offset="0.5" stop-color="#c4c4c4"/><stop offset="1" stop-color="#808080"/></linearGradient></defs><path d="M5.5 0.4 L10.8 5.7 L7.8 5.7 L7.8 10.6 L3.2 10.6 L3.2 5.7 L0.2 5.7 Z" transform="rotate(90 5.5 5.5)" fill="url(#ag)" stroke="#3a3a3a" stroke-width="1" stroke-linejoin="miter"/></svg>
<div class="r" style="left:447px;top:356px;width:12px;height:12px;background:linear-gradient(135deg,#e8e8e8,#fafafa);border:1px solid #d2d2d2;box-sizing:border-box;border-radius:1px"></div>
<div class="t" style="left:462.70px;top:358.69px;font-size:11px;line-height:11px;color:#1852d6;-webkit-text-stroke:0.15px #1852d6;transform:scaleX(0.9337);">Ken</div>
<div class="t" style="left:29.40px;top:373.89px;font-size:11px;line-height:11px;color:#222;-webkit-text-stroke:0.15px #222;transform:scaleX(1.0456);">Quick ratio</div>
<div class="t" style="left:216.73px;top:373.89px;font-size:11px;line-height:11px;color:#222;-webkit-text-stroke:0.15px #222;">-8.44</div>
<div class="t" style="left:251.59px;top:373.89px;font-size:11px;line-height:11px;color:#222;-webkit-text-stroke:0.15px #222;">1.00</div>
<svg class="r" style="left:285.6px;top:371.4px" width="12" height="12" viewBox="0 0 12 12"><defs><linearGradient id="dg" x1="0" y1="0" x2="1" y2="1"><stop offset="0" stop-color="#ffb0b0"/><stop offset="1" stop-color="#f05050"/></linearGradient></defs><path d="M6 0.6 L11.4 6 L6 11.4 L0.6 6 Z" fill="url(#dg)" stroke="#c02830" stroke-width="1.1" stroke-linejoin="round"/></svg>
<svg class="r" style="left:320.1px;top:371.8px" width="11" height="11" viewBox="0 0 11 11"><defs><linearGradient id="ag" x1="0" y1="0" x2="1" y2="0"><stop offset="0" stop-color="#888"/><stop offset="0.5" stop-color="#c4c4c4"/><stop offset="1" stop-color="#808080"/></linearGradient></defs><path d="M5.5 0.4 L10.8 5.7 L7.8 5.7 L7.8 10.6 L3.2 10.6 L3.2 5.7 L0.2 5.7 Z"  fill="url(#ag)" stroke="#3a3a3a" stroke-width="1" stroke-linejoin="miter"/></svg>
<div class="t" style="left:371.59px;top:374.49px;font-size:11px;line-height:11px;color:#222;-webkit-text-stroke:0.15px #222;">0.63</div>
<svg class="r" style="left:415.0px;top:371.8px" width="11" height="11" viewBox="0 0 11 11"><defs><linearGradient id="ag" x1="0" y1="0" x2="1" y2="0"><stop offset="0" stop-color="#888"/><stop offset="0.5" stop-color="#c4c4c4"/><stop offset="1" stop-color="#808080"/></linearGradient></defs><path d="M5.5 0.4 L10.8 5.7 L7.8 5.7 L7.8 10.6 L3.2 10.6 L3.2 5.7 L0.2 5.7 Z" transform="rotate(90 5.5 5.5)" fill="url(#ag)" stroke="#3a3a3a" stroke-width="1" stroke-linejoin="miter"/></svg>
<div class="r" style="left:447px;top:372px;width:12px;height:12px;background:linear-gradient(135deg,#e8e8e8,#fafafa);border:1px solid #d2d2d2;box-sizing:border-box;border-radius:1px"></div>
<div class="t" style="left:462.70px;top:374.69px;font-size:11px;line-height:11px;color:#1852d6;-webkit-text-stroke:0.15px #1852d6;transform:scaleX(0.9337);">Ken</div>
<div class="t" style="left:29.40px;top:389.89px;font-size:11px;line-height:11px;color:#222;-webkit-text-stroke:0.15px #222;transform:scaleX(1.0631);">Inventory turnover</div>
<div class="t" style="left:220.39px;top:389.89px;font-size:11px;line-height:11px;color:#222;-webkit-text-stroke:0.15px #222;">8.09</div>
<div class="t" style="left:251.59px;top:389.89px;font-size:11px;line-height:11px;color:#222;-webkit-text-stroke:0.15px #222;">0.01</div>
<svg class="r" style="left:285.6px;top:387.4px" width="12" height="12" viewBox="0 0 12 12"><defs><linearGradient id="cg" x1="0" y1="0" x2="1" y2="1"><stop offset="0" stop-color="#a0e8a0"/><stop offset="1" stop-color="#30a040"/></linearGradient></defs><circle cx="6" cy="6" r="5.2" fill="url(#cg)" stroke="#2a7a30" stroke-width="1"/></svg>
<svg class="r" style="left:320.1px;top:387.8px" width="11" height="11" viewBox="0 0 11 11"><defs><linearGradient id="ag" x1="0" y1="0" x2="1" y2="0"><stop offset="0" stop-color="#888"/><stop offset="0.5" stop-color="#c4c4c4"/><stop offset="1" stop-color="#808080"/></linearGradient></defs><path d="M5.5 0.4 L10.8 5.7 L7.8 5.7 L7.8 10.6 L3.2 10.6 L3.2 5.7 L0.2 5.7 Z"  fill="url(#ag)" stroke="#3a3a3a" stroke-width="1" stroke-linejoin="miter"/></svg>
<div class="t" style="left:371.59px;top:390.49px;font-size:11px;line-height:11px;color:#222;-webkit-text-stroke:0.15px #222;">7.51</div>
<svg class="r" style="left:415.0px;top:387.8px" width="11" height="11" viewBox="0 0 11 11"><defs><linearGradient id="ag" x1="0" y1="0" x2="1" y2="0"><stop offset="0" stop-color="#888"/><stop offset="0.5" stop-color="#c4c4c4"/><stop offset="1" stop-color="#808080"/></linearGradient></defs><path d="M5.5 0.4 L10.8 5.7 L7.8 5.7 L7.8 10.6 L3.2 10.6 L3.2 5.7 L0.2 5.7 Z" transform="rotate(180 5.5 5.5)" fill="url(#ag)" stroke="#3a3a3a" stroke-width="1" stroke-linejoin="miter"/></svg>
<div class="r" style="left:447px;top:388px;width:12px;height:12px;background:linear-gradient(135deg,#e8e8e8,#fafafa);border:1px solid #d2d2d2;box-sizing:border-box;border-radius:1px"></div>
<div class="t" style="left:462.70px;top:390.69px;font-size:11px;line-height:11px;color:#1852d6;-webkit-text-stroke:0.15px #1852d6;transform:scaleX(0.9592);">Karl</div>
<div class="t" style="left:29.40px;top:405.89px;font-size:11px;line-height:11px;color:#1852d6;-webkit-text-stroke:0.15px #1852d6;transform:scaleX(1.0292);">Average collection period (DSO)</div>
<div class="t" style="left:214.28px;top:405.89px;font-size:11px;line-height:11px;color:#222;-webkit-text-stroke:0.15px #222;">68.50</div>
<div class="t" style="left:245.47px;top:405.89px;font-size:11px;line-height:11px;color:#222;-webkit-text-stroke:0.15px #222;">45.10</div>
<svg class="r" style="left:285.6px;top:403.4px" width="12" height="12" viewBox="0 0 12 12"><defs><linearGradient id="dg" x1="0" y1="0" x2="1" y2="1"><stop offset="0" stop-color="#ffb0b0"/><stop offset="1" stop-color="#f05050"/></linearGradient></defs><path d="M6 0.6 L11.4 6 L6 11.4 L0.6 6 Z" fill="url(#dg)" stroke="#c02830" stroke-width="1.1" stroke-linejoin="round"/></svg>
<svg class="r" style="left:320.1px;top:403.8px" width="11" height="11" viewBox="0 0 11 11"><defs><linearGradient id="ag" x1="0" y1="0" x2="1" y2="0"><stop offset="0" stop-color="#888"/><stop offset="0.5" stop-color="#c4c4c4"/><stop offset="1" stop-color="#808080"/></linearGradient></defs><path d="M5.5 0.4 L10.8 5.7 L7.8 5.7 L7.8 10.6 L3.2 10.6 L3.2 5.7 L0.2 5.7 Z"  fill="url(#ag)" stroke="#3a3a3a" stroke-width="1" stroke-linejoin="miter"/></svg>
<div class="t" style="left:371.59px;top:406.49px;font-size:11px;line-height:11px;color:#222;-webkit-text-stroke:0.15px #222;">42.0</div>
<svg class="r" style="left:415.0px;top:403.8px" width="11" height="11" viewBox="0 0 11 11"><defs><linearGradient id="ag" x1="0" y1="0" x2="1" y2="0"><stop offset="0" stop-color="#888"/><stop offset="0.5" stop-color="#c4c4c4"/><stop offset="1" stop-color="#808080"/></linearGradient></defs><path d="M5.5 0.4 L10.8 5.7 L7.8 5.7 L7.8 10.6 L3.2 10.6 L3.2 5.7 L0.2 5.7 Z"  fill="url(#ag)" stroke="#3a3a3a" stroke-width="1" stroke-linejoin="miter"/></svg>
<div class="r" style="left:447px;top:404px;width:12px;height:12px;background:linear-gradient(135deg,#e8e8e8,#fafafa);border:1px solid #d2d2d2;box-sizing:border-box;border-radius:1px"></div>
<div class="t" style="left:462.70px;top:406.69px;font-size:11px;line-height:11px;color:#1852d6;-webkit-text-stroke:0.15px #1852d6;transform:scaleX(0.9843);">Phyllis</div>
<div class="t" style="left:29.40px;top:421.89px;font-size:11px;line-height:11px;color:#222;-webkit-text-stroke:0.15px #222;transform:scaleX(1.0568);">Average collection period</div>
<div class="t" style="left:220.39px;top:421.89px;font-size:11px;line-height:11px;color:#222;-webkit-text-stroke:0.15px #222;">0.16</div>
<div class="t" style="left:251.59px;top:421.89px;font-size:11px;line-height:11px;color:#222;-webkit-text-stroke:0.15px #222;">0.00</div>
<svg class="r" style="left:285.6px;top:419.4px" width="12" height="12" viewBox="0 0 12 12"><defs><linearGradient id="dg" x1="0" y1="0" x2="1" y2="1"><stop offset="0" stop-color="#ffb0b0"/><stop offset="1" stop-color="#f05050"/></linearGradient></defs><path d="M6 0.6 L11.4 6 L6 11.4 L0.6 6 Z" fill="url(#dg)" stroke="#c02830" stroke-width="1.1" stroke-linejoin="round"/></svg>
<svg class="r" style="left:320.1px;top:419.8px" width="11" height="11" viewBox="0 0 11 11"><defs><linearGradient id="ag" x1="0" y1="0" x2="1" y2="0"><stop offset="0" stop-color="#888"/><stop offset="0.5" stop-color="#c4c4c4"/><stop offset="1" stop-color="#808080"/></linearGradient></defs><path d="M5.5 0.4 L10.8 5.7 L7.8 5.7 L7.8 10.6 L3.2 10.6 L3.2 5.7 L0.2 5.7 Z"  fill="url(#ag)" stroke="#3a3a3a" stroke-width="1" stroke-linejoin="miter"/></svg>
<div class="t" style="left:371.59px;top:422.49px;font-size:11px;line-height:11px;color:#222;-webkit-text-stroke:0.15px #222;">42.0</div>
<svg class="r" style="left:415.0px;top:419.8px" width="11" height="11" viewBox="0 0 11 11"><defs><linearGradient id="ag" x1="0" y1="0" x2="1" y2="0"><stop offset="0" stop-color="#888"/><stop offset="0.5" stop-color="#c4c4c4"/><stop offset="1" stop-color="#808080"/></linearGradient></defs><path d="M5.5 0.4 L10.8 5.7 L7.8 5.7 L7.8 10.6 L3.2 10.6 L3.2 5.7 L0.2 5.7 Z"  fill="url(#ag)" stroke="#3a3a3a" stroke-width="1" stroke-linejoin="miter"/></svg>
<div class="r" style="left:447px;top:420px;width:12px;height:12px;background:linear-gradient(135deg,#e8e8e8,#fafafa);border:1px solid #d2d2d2;box-sizing:border-box;border-radius:1px"></div>
<div class="t" style="left:462.70px;top:422.69px;font-size:11px;line-height:11px;color:#1852d6;-webkit-text-stroke:0.15px #1852d6;transform:scaleX(0.9843);">Phyllis</div>
<div class="r" style="left:16px;top:435px;width:483px;height:1px;background:#dcdcdc"></div>
<svg class="r" style="left:30px;top:439.3px" width="10" height="10" viewBox="0 0 10 10"><defs><linearGradient id="pg" x1="0" y1="0" x2="0" y2="1"><stop offset="0" stop-color="#8ae07a"/><stop offset="1" stop-color="#3cb83c"/></linearGradient></defs><path d="M3.3 0.6 H6.7 V3.3 H9.4 V6.7 H6.7 V9.4 H3.3 V6.7 H0.6 V3.3 H3.3 Z" fill="url(#pg)" stroke="#0e7a14" stroke-width="1.1"/></svg>
<div class="t" style="left:42.00px;top:439.19px;font-size:11px;line-height:11px;color:#1852d6;-webkit-text-stroke:0.15px #1852d6;transform:scaleX(0.9477);">Add KPIs</div>
<svg class="r" style="left:98.3px;top:439px" width="9" height="9" viewBox="0 0 9 9"><rect x="0.5" y="0.5" width="8" height="8" fill="#f4f4f4" stroke="#9a9a9a"/><rect x="2.5" y="3" width="4" height="3" fill="#8a8a8a"/></svg>
<div class="t" style="left:110.50px;top:439.19px;font-size:11px;line-height:11px;color:#1852d6;-webkit-text-stroke:0.15px #1852d6;transform:scaleX(0.9697);">Manage KPIs</div>
<div class="t" style="left:322.50px;top:439.69px;font-size:11px;line-height:11px;color:#5a5a5a;-webkit-text-stroke:0.15px #5a5a5a;transform:scaleX(0.9853);">Currency:</div>
<div class="t" style="left:374.00px;top:439.69px;font-size:11px;line-height:11px;color:#222;font-weight:bold;transform:scaleX(0.8793);">USD</div>
<div class="r" style="left:402px;top:444.6px;width:3px;height:3px;background:#222;border-radius:50%"></div>
<div class="t" style="left:411.60px;top:439.69px;font-size:11px;line-height:11px;color:#5a5a5a;-webkit-text-stroke:0.15px #5a5a5a;transform:scaleX(1.0060);">Company:</div>
<div class="t" style="left:466.30px;top:439.69px;font-size:11px;line-height:11px;color:#222;font-weight:bold;transform:scaleX(0.9647);">USMF</div>
<svg class="r" style="left:479px;top:526px" width="9" height="9" viewBox="0 0 9 9"><rect x="0.5" y="0.5" width="8" height="8" fill="#dde4ee" stroke="#8a9ab0" stroke-width="1" rx="1"/><path d="M2.5 6.5 L6.3 2.7 M3.6 2.5 H6.5 V5.4" stroke="#111" stroke-width="1.5" fill="none"/></svg>
<div class="t" style="left:136.50px;top:599.26px;font-size:9.5px;line-height:9.5px;color:#a0a0a0;-webkit-text-stroke:0.15px #a0a0a0;transform:scaleX(0.9206);">Customer group name</div>
<div class="r" style="left:106.5px;top:613px;width:5px;height:5px;background:#3a90a8;border-radius:50%"></div>
<div class="t" style="left:116.00px;top:612.65px;font-size:7.5px;line-height:7.5px;color:#222;transform:scaleX(0.8676);">Retail customers</div>
<div class="r" style="left:179px;top:613px;width:5px;height:5px;background:#d85a40;border-radius:50%"></div>
<div class="t" style="left:187.70px;top:612.65px;font-size:7.5px;line-height:7.5px;color:#222;transform:scaleX(0.8687);">Wholesales customers</div>
<div class="r" style="left:16px;top:622px;width:327px;height:144px;background:#f8fafc"></div>
<div class="r" style="left:28.500000000000004px;top:713.9px;width:9.4px;height:9.4px;background:#72b8ca;border-radius:50%"></div>
<div class="t" style="left:39.00px;top:715.15px;font-size:7.5px;line-height:7.5px;color:#333;transform:scaleX(0.9322);">WA</div>
<div class="r" style="left:28.700000000000003px;top:743.8px;width:9.0px;height:9.0px;background:#e8826c;border-radius:50%"></div>
<div class="t" style="left:39.00px;top:744.65px;font-size:7.5px;line-height:7.5px;color:#333;transform:scaleX(0.8407);">OR</div>
<div class="r" style="left:187px;top:723.8px;width:8px;height:8px;background:#e8826c;border-radius:50%"></div>
<div class="t" style="left:196.50px;top:724.15px;font-size:7.5px;line-height:7.5px;color:#333;transform:scaleX(0.9829);">MN</div>
<div class="r" style="left:237.1px;top:735.9px;width:9.0px;height:9.0px;background:#72b8ca;border-radius:50%"></div>
<div class="t" style="left:247.00px;top:736.65px;font-size:7.5px;line-height:7.5px;color:#333;transform:scaleX(0.8434);">MI</div>
<svg class="r" style="left:295px;top:749px" width="18" height="18" viewBox="0 0 18 18"><path d="M9 0.5 A8.5 8.5 0 0 0 9 17.5 Z" fill="#e8826c"/><path d="M9 0.5 A8.5 8.5 0 0 1 9 17.5 Z" fill="#72b8ca"/><path d="M9 0.5 V17.5" stroke="#555" stroke-width="0.8"/></svg>
<div class="t" style="left:314.00px;top:753.65px;font-size:7.5px;line-height:7.5px;color:#333;transform:scaleX(0.8654);">NY</div>
<div class="r" style="left:323.0px;top:758.0px;width:7.2px;height:7.2px;background:#e8826c;border-radius:50%"></div>
<div class="t" style="left:330.50px;top:758.15px;font-size:7.5px;line-height:7.5px;color:#333;transform:scaleX(0.9292);">MA</div>
<div class="t" style="left:349.80px;top:614.83px;font-size:8px;line-height:8px;color:#a8a8a8;transform:scaleX(0.9395);">Invoice line amount by Sales district</div>
<div class="r" style="left:370px;top:639.5px;width:123px;height:1px;background:#eef0f2"></div>
<div class="t" style="left:359.30px;top:636.54px;font-size:5.5px;line-height:5.5px;color:#333;">25M</div>
<div class="r" style="left:370px;top:652.5px;width:123px;height:1px;background:#eef0f2"></div>
<div class="t" style="left:359.30px;top:649.54px;font-size:5.5px;line-height:5.5px;color:#333;">20M</div>
<div class="r" style="left:370px;top:664.5px;width:123px;height:1px;background:#eef0f2"></div>
<div class="t" style="left:359.30px;top:662.34px;font-size:5.5px;line-height:5.5px;color:#333;">15M</div>
<div class="r" style="left:370px;top:677.5px;width:123px;height:1px;background:#eef0f2"></div>
<div class="t" style="left:359.30px;top:674.74px;font-size:5.5px;line-height:5.5px;color:#333;">10M</div>
<div class="r" style="left:370px;top:690.5px;width:123px;height:1px;background:#eef0f2"></div>
<div class="t" style="left:362.36px;top:687.54px;font-size:5.5px;line-height:5.5px;color:#333;">5M</div>
<div class="r" style="left:370px;top:703.5px;width:123px;height:1px;background:#eef0f2"></div>
<div class="t" style="left:362.36px;top:700.54px;font-size:5.5px;line-height:5.5px;color:#333;">0M</div>
<div class="t" style="left:0.00px;top:-0.85px;font-size:1px;line-height:1px;color:#fff;"></div>
<div class="t" style="left:351px;top:683px;font-size:5.5px;line-height:6px;color:#666;transform:rotate(-90deg);transform-origin:0 0">(Millions)</div>
<div class="r" style="left:376.2px;top:646px;width:23.80000000000001px;height:57px;background:#3a9bb0"></div>
<div class="r" style="left:405.5px;top:670.7px;width:23.80000000000001px;height:32.299999999999955px;background:#3a9bb0"></div>
<div class="r" style="left:435.9px;top:692.2px;width:23.30000000000001px;height:10.799999999999955px;background:#3a9bb0"></div>
<div class="r" style="left:465px;top:680px;width:23.5px;height:23px;background:#3a9bb0"></div>
<div class="t" style="left:385.00px;top:705.34px;font-size:5.5px;line-height:5.5px;color:#333;">10</div>
<div class="t" style="left:414.50px;top:705.34px;font-size:5.5px;line-height:5.5px;color:#333;">20</div>
<div class="t" style="left:444.50px;top:705.34px;font-size:5.5px;line-height:5.5px;color:#333;">30</div>
<div class="t" style="left:474.00px;top:705.34px;font-size:5.5px;line-height:5.5px;color:#333;">40</div>
<div class="r" style="left:343px;top:622px;width:1px;height:144px;background:#eef2f5"></div>
<div class="t" style="left:348.00px;top:735.23px;font-size:8px;line-height:8px;color:#b0a8a0;transform:scaleX(0.9574);">Invoice line amount by Customer group na</div>
<div class="r" style="left:370px;top:759px;width:123px;height:1px;background:#eef0f2"></div>
<div class="t" style="left:359.30px;top:756.34px;font-size:5.5px;line-height:5.5px;color:#333;">25M</div>
<div class="r" style="left:377.4px;top:758.8px;width:48.6px;height:7.2px;background:#3a9bb0"></div>
<div class="r" style="left:491px;top:602px;width:3px;height:3px;background:#e0e4e8"></div>
<div class="r" style="left:519px;top:153px;width:388px;height:24px;background:linear-gradient(#fff8c0,#fbe07a);border:1px solid #bfa84a;box-sizing:border-box"></div>
<svg class="r" style="left:526px;top:156px" width="12" height="16" viewBox="0 0 12 16"><path d="M0.5 0.5 H8 L11.5 4 V15.5 H0.5 Z" fill="#fff" stroke="#8a8a8a" stroke-width="0.9"/><rect x="2.5" y="5" width="1.6" height="1.6" fill="#3a3a8a"/><rect x="5" y="5.3" width="4.5" height="1" fill="#7a7a9a"/><rect x="2.5" y="8" width="1.6" height="1.6" fill="#3a3a8a"/><rect x="5" y="8.3" width="4.5" height="1" fill="#7a7a9a"/><rect x="2.5" y="11" width="1.6" height="1.6" fill="#3a3a8a"/><rect x="5" y="11.3" width="4.5" height="1" fill="#7a7a9a"/></svg>
<div class="t" style="left:546.00px;top:160.69px;font-size:11px;line-height:11px;color:#1a1a1a;-webkit-text-stroke:0.15px #1a1a1a;transform:scaleX(1.0701);">Contact for upsell</div>
<div class="r" style="left:909px;top:154px;width:90px;height:23px;background:linear-gradient(#f2f2f2,#d6d6d6);border:1px solid #7a7a7a;box-sizing:border-box"></div>
<div class="t" style="left:922.40px;top:154.99px;font-size:13px;line-height:13px;color:#1a1a1a;-webkit-text-stroke:0.15px #1a1a1a;transform:scaleX(1.0376);">Actions</div>
<svg class="r" style="left:971.5px;top:161.7px" width="7" height="4" viewBox="0 0 7 4"><path d="M0 0 H6 L3 3.5 Z" fill="#222"/></svg>
<div class="t" style="left:523.50px;top:185.69px;font-size:11px;line-height:11px;color:#173a8a;font-weight:bold;">!</div>
<div class="t" style="left:549.40px;top:185.69px;font-size:11px;line-height:11px;color:#173a8a;font-weight:bold;transform:scaleX(0.9673);">Subject</div>
<div class="t" style="left:848.10px;top:185.69px;font-size:11px;line-height:11px;color:#173a8a;font-weight:bold;">Due date</div>
<div class="r" style="left:519px;top:203px;width:463px;height:25px;background:#e3ebf9;border-top:1px solid #7aa4f0;border-bottom:1px solid #7aa4f0;box-sizing:border-box"></div>
<div class="r" style="left:519px;top:300px;width:463px;height:23px;background:#f5f5f5"></div>
<svg class="r" style="left:523px;top:208px" width="11" height="16" viewBox="0 0 11 16"><rect x="0.6" y="0.6" width="8.6" height="12.8" rx="1" fill="#f2f6fc" stroke="#9aa0a8" stroke-width="1"/><rect x="1.4" y="1.4" width="7" height="1.6" fill="#bcd8f4"/><rect x="1.6" y="4.4" width="6.6" height="0.8" fill="#a8c0d8"/><rect x="1.6" y="6.7" width="6.6" height="0.8" fill="#a8c0d8"/><rect x="1.6" y="9.0" width="6.6" height="0.8" fill="#a8c0d8"/><rect x="1.6" y="11.3" width="6.6" height="0.8" fill="#a8c0d8"/><path d="M9.4 6 A3.6 4.2 0 0 0 9.4 14.2 Z" fill="#d41a1a"/></svg>
<svg class="r" style="left:537.2px;top:207px" width="10" height="16" viewBox="0 0 10 16"><path d="M0.7 0.5 H9.5 V15.5 H0.7 Z" fill="#fff" stroke="#c8c8c8" stroke-width="1"/><path d="M0.7 0.5 V15.5 H9.5" fill="none" stroke="#707070" stroke-width="1"/><circle cx="4" cy="5.9" r="1.05" fill="#2a2a7a"/><rect x="5.8" y="5.5" width="3.2" height="1" fill="#9090b0"/><circle cx="4" cy="9.0" r="1.05" fill="#2a2a7a"/><rect x="5.8" y="8.600000000000001" width="3.2" height="1" fill="#9090b0"/><circle cx="4" cy="12.1" r="1.05" fill="#2a2a7a"/><rect x="5.8" y="11.700000000000001" width="3.2" height="1" fill="#9090b0"/></svg>
<div class="t" style="left:554.00px;top:209.69px;font-size:11px;line-height:11px;color:#1a1a1a;font-weight:bold;transform:scaleX(0.9775);">Contact for upsell</div>
<div class="t" style="left:847.70px;top:209.29px;font-size:11px;line-height:11px;color:#1a1a1a;font-weight:bold;transform:scaleX(1.0182);">11/12/2013 8:00:00 AM</div>
<svg class="r" style="left:523px;top:233px" width="11" height="16" viewBox="0 0 11 16"><rect x="0.6" y="0.6" width="8.6" height="12.8" rx="1" fill="#f2f6fc" stroke="#9aa0a8" stroke-width="1"/><rect x="1.4" y="1.4" width="7" height="1.6" fill="#bcd8f4"/><rect x="1.6" y="4.4" width="6.6" height="0.8" fill="#a8c0d8"/><rect x="1.6" y="6.7" width="6.6" height="0.8" fill="#a8c0d8"/><rect x="1.6" y="9.0" width="6.6" height="0.8" fill="#a8c0d8"/><rect x="1.6" y="11.3" width="6.6" height="0.8" fill="#a8c0d8"/></svg>
<svg class="r" style="left:537.2px;top:232px" width="10" height="16" viewBox="0 0 10 16"><path d="M0.7 0.5 H9.5 V15.5 H0.7 Z" fill="#fff" stroke="#c8c8c8" stroke-width="1"/><path d="M0.7 0.5 V15.5 H9.5" fill="none" stroke="#707070" stroke-width="1"/><circle cx="4" cy="5.9" r="1.05" fill="#2a2a7a"/><rect x="5.8" y="5.5" width="3.2" height="1" fill="#9090b0"/><circle cx="4" cy="9.0" r="1.05" fill="#2a2a7a"/><rect x="5.8" y="8.600000000000001" width="3.2" height="1" fill="#9090b0"/><circle cx="4" cy="12.1" r="1.05" fill="#2a2a7a"/><rect x="5.8" y="11.700000000000001" width="3.2" height="1" fill="#9090b0"/></svg>
<div class="t" style="left:554.00px;top:235.69px;font-size:11px;line-height:11px;color:#1a1a1a;font-weight:bold;transform:scaleX(0.9892);">Telemarketing</div>
<div class="t" style="left:847.70px;top:236.39px;font-size:11px;line-height:11px;color:#1a1a1a;font-weight:bold;transform:scaleX(1.0148);">12/12/2013 12:00:00 AM</div>
<svg class="r" style="left:523px;top:256px" width="11" height="16" viewBox="0 0 11 16"><rect x="0.6" y="0.6" width="8.6" height="12.8" rx="1" fill="#f2f6fc" stroke="#9aa0a8" stroke-width="1"/><rect x="1.4" y="1.4" width="7" height="1.6" fill="#bcd8f4"/><rect x="1.6" y="4.4" width="6.6" height="0.8" fill="#a8c0d8"/><rect x="1.6" y="6.7" width="6.6" height="0.8" fill="#a8c0d8"/><rect x="1.6" y="9.0" width="6.6" height="0.8" fill="#a8c0d8"/><rect x="1.6" y="11.3" width="6.6" height="0.8" fill="#a8c0d8"/><path d="M9.4 6 A3.6 4.2 0 0 0 9.4 14.2 Z" fill="#d41a1a"/></svg>
<svg class="r" style="left:536.5px;top:255px" width="10" height="16" viewBox="0 0 10 16"><path d="M0.6 0.5 H9.5 V15.5 H0.6 Z" fill="#fff" stroke="#c0c0c0" stroke-width="1"/><path d="M0.6 0.5 V15.5 H9.5" fill="none" stroke="#7a7a7a" stroke-width="1"/><ellipse cx="5.4" cy="4.4" rx="2.9" ry="1.7" fill="#3cb83c"/><ellipse cx="5" cy="8.3" rx="2.2" ry="1.6" fill="#f08a40"/><circle cx="4" cy="12" r="1.8" fill="#2a82e0"/><path d="M6.8 7.5 H10 V15 H6.8 Q5.6 13.5 6.6 12 Q5.6 10.5 6.8 9 Z" fill="#f0c030"/></svg>
<div class="t" style="left:554.00px;top:257.69px;font-size:11px;line-height:11px;color:#1a1a1a;font-weight:bold;">Quotation Approval Required</div>
<div class="t" style="left:847.70px;top:257.29px;font-size:11px;line-height:11px;color:#1a1a1a;font-weight:bold;transform:scaleX(1.0099);">10/15/2013 11:34:00 PM</div>
<svg class="r" style="left:523px;top:281px" width="11" height="16" viewBox="0 0 11 16"><rect x="0.6" y="0.6" width="8.6" height="12.8" rx="1" fill="#f2f6fc" stroke="#9aa0a8" stroke-width="1"/><rect x="1.4" y="1.4" width="7" height="1.6" fill="#bcd8f4"/><rect x="1.6" y="4.4" width="6.6" height="0.8" fill="#a8c0d8"/><rect x="1.6" y="6.7" width="6.6" height="0.8" fill="#a8c0d8"/><rect x="1.6" y="9.0" width="6.6" height="0.8" fill="#a8c0d8"/><rect x="1.6" y="11.3" width="6.6" height="0.8" fill="#a8c0d8"/><path d="M9.4 6 A3.6 4.2 0 0 0 9.4 14.2 Z" fill="#d41a1a"/></svg>
<svg class="r" style="left:536.5px;top:280px" width="10" height="16" viewBox="0 0 10 16"><path d="M0.6 0.5 H9.5 V15.5 H0.6 Z" fill="#fff" stroke="#c0c0c0" stroke-width="1"/><path d="M0.6 0.5 V15.5 H9.5" fill="none" stroke="#7a7a7a" stroke-width="1"/><ellipse cx="5.4" cy="4.4" rx="2.9" ry="1.7" fill="#3cb83c"/><ellipse cx="5" cy="8.3" rx="2.2" ry="1.6" fill="#f08a40"/><circle cx="4" cy="12" r="1.8" fill="#2a82e0"/><path d="M6.8 7.5 H10 V15 H6.8 Q5.6 13.5 6.6 12 Q5.6 10.5 6.8 9 Z" fill="#f0c030"/></svg>
<div class="t" style="left:554.00px;top:283.69px;font-size:11px;line-height:11px;color:#1a1a1a;font-weight:bold;transform:scaleX(0.9489);">Case Requires Review</div>
<div class="t" style="left:847.70px;top:284.09px;font-size:11px;line-height:11px;color:#1a1a1a;font-weight:bold;transform:scaleX(1.0099);">10/15/2013 11:18:00 PM</div>
<svg class="r" style="left:523px;top:305px" width="11" height="16" viewBox="0 0 11 16"><rect x="0.6" y="0.6" width="8.6" height="12.8" rx="1" fill="#f2f6fc" stroke="#9aa0a8" stroke-width="1"/><rect x="1.4" y="1.4" width="7" height="1.6" fill="#bcd8f4"/><rect x="1.6" y="4.4" width="6.6" height="0.8" fill="#a8c0d8"/><rect x="1.6" y="6.7" width="6.6" height="0.8" fill="#a8c0d8"/><rect x="1.6" y="9.0" width="6.6" height="0.8" fill="#a8c0d8"/><rect x="1.6" y="11.3" width="6.6" height="0.8" fill="#a8c0d8"/><path d="M9.4 6 A3.6 4.2 0 0 0 9.4 14.2 Z" fill="#d41a1a"/></svg>
<svg class="r" style="left:536.5px;top:304px" width="10" height="16" viewBox="0 0 10 16"><path d="M0.6 0.5 H9.5 V15.5 H0.6 Z" fill="#fff" stroke="#c0c0c0" stroke-width="1"/><path d="M0.6 0.5 V15.5 H9.5" fill="none" stroke="#7a7a7a" stroke-width="1"/><ellipse cx="5.4" cy="4.4" rx="2.9" ry="1.7" fill="#3cb83c"/><ellipse cx="5" cy="8.3" rx="2.2" ry="1.6" fill="#f08a40"/><circle cx="4" cy="12" r="1.8" fill="#2a82e0"/><path d="M6.8 7.5 H10 V15 H6.8 Q5.6 13.5 6.6 12 Q5.6 10.5 6.8 9 Z" fill="#f0c030"/></svg>
<div class="t" style="left:554.00px;top:306.09px;font-size:11px;line-height:11px;color:#1a1a1a;font-weight:bold;transform:scaleX(0.9872);">Journal Approval Required</div>
<div class="t" style="left:847.70px;top:304.99px;font-size:11px;line-height:11px;color:#1a1a1a;font-weight:bold;transform:scaleX(1.0073);">8/29/2013 3:07:00 PM</div>
<div class="r" style="left:982px;top:203px;width:17px;height:200px;background:#ededed"></div>
<div class="r" style="left:983px;top:237px;width:15px;height:117px;background:#cdcdcd"></div>
<svg class="r" style="left:984px;top:219px" width="13" height="10" viewBox="0 0 13 10"><path d="M1.5 8 L6.5 2.5 L11.5 8" fill="none" stroke="#606060" stroke-width="2.2"/></svg>
<svg class="r" style="left:984px;top:377px" width="13" height="10" viewBox="0 0 13 10"><path d="M1.5 2 L6.5 7.5 L11.5 2" fill="none" stroke="#606060" stroke-width="2.2"/></svg>
<div class="r" style="left:1006px;top:56px;width:17px;height:710px;background:#efefef"></div>
<div class="r" style="left:1007px;top:91px;width:15px;height:236px;background:#cdcdcd"></div>
<svg class="r" style="left:1008px;top:73px" width="13" height="11" viewBox="0 0 13 11"><path d="M1.5 9 L6.5 3 L11.5 9" fill="none" stroke="#555" stroke-width="2.6"/></svg>
<svg class="r" style="left:1008px;top:739px" width="13" height="11" viewBox="0 0 13 11"><path d="M1.5 2 L6.5 8 L11.5 2" fill="none" stroke="#555" stroke-width="2.6"/></svg>
<div class="r" style="left:518px;top:470px;width:14px;height:14px;background:#fff;border:1px solid #7a7a7a;box-sizing:border-box"></div>
<div class="t" style="left:541.70px;top:471.91px;font-size:10.5px;line-height:10.5px;color:#173a8a;font-weight:bold;transform:scaleX(0.9409);">Type</div>
<div class="t" style="left:586.60px;top:471.91px;font-size:10.5px;line-height:10.5px;color:#173a8a;font-weight:bold;">Name</div>
<div class="t" style="left:721.00px;top:471.51px;font-size:10.5px;line-height:10.5px;color:#173a8a;font-weight:bold;transform:scaleX(1.0648);">Modified</div>
<div class="r" style="left:854px;top:471px;width:12px;height:12px;background:linear-gradient(#f0f0f0,#fcfcfc);border:1px solid #c0c0c0;box-sizing:border-box"></div>
<div class="t" style="left:869.80px;top:471.51px;font-size:10.5px;line-height:10.5px;color:#173a8a;font-weight:bold;transform:scaleX(1.0286);">Modified By</div>
<svg class="r" style="left:546px;top:498px" width="17" height="16" viewBox="0 0 17 16"><path d="M4.5 1.5 H13 L16 4.5 V15.5 H4.5 Z" fill="#f4f6fa" stroke="#7a8aa0" stroke-width="0.9"/><path d="M6.5 7 H14 M6.5 9.5 H14 M6.5 12 H14" stroke="#9ab0c8" stroke-width="0.9"/><rect x="0.5" y="1.5" width="9" height="9" fill="#2e8a3a" stroke="#1a5a20" stroke-width="0.8"/><path d="M2.6 3.5 L7.4 8.5 M7.4 3.5 L2.6 8.5" stroke="#fff" stroke-width="1.5"/></svg>
<div class="t" style="left:586.60px;top:499.39px;font-size:11px;line-height:11px;color:#1852d6;-webkit-text-stroke:0.15px #1852d6;transform:scaleX(1.0129);">Project Analysis</div>
<div class="t" style="left:719.60px;top:498.89px;font-size:11px;line-height:11px;color:#222;-webkit-text-stroke:0.15px #222;transform:scaleX(1.0152);">3/8/2013 10:30 AM</div>
<div class="t" style="left:866.00px;top:498.89px;font-size:11px;line-height:11px;color:#1852d6;-webkit-text-stroke:0.15px #1852d6;transform:scaleX(1.0089);">System Account</div>
<div class="r" style="left:510px;top:519px;width:491px;height:1px;background:#c6d8f2"></div>
<svg class="r" style="left:519.5px;top:531px" width="10" height="10" viewBox="0 0 10 10"><defs><linearGradient id="pg" x1="0" y1="0" x2="0" y2="1"><stop offset="0" stop-color="#8ae07a"/><stop offset="1" stop-color="#3cb83c"/></linearGradient></defs><path d="M3.3 0.6 H6.7 V3.3 H9.4 V6.7 H6.7 V9.4 H3.3 V6.7 H0.6 V3.3 H3.3 Z" fill="url(#pg)" stroke="#0e7a14" stroke-width="1.1"/></svg>
<div class="t" style="left:532.40px;top:531.09px;font-size:11px;line-height:11px;color:#1852d6;-webkit-text-stroke:0.15px #1852d6;transform:scaleX(1.1580);">Add document</div>
<svg class="r" style="left:981.5px;top:628px" width="9" height="9" viewBox="0 0 9 9"><rect x="0.5" y="0.5" width="8" height="8" fill="#dde4ee" stroke="#8a9ab0" stroke-width="1" rx="1"/><path d="M2.5 6.5 L6.3 2.7 M3.6 2.5 H6.5 V5.4" stroke="#111" stroke-width="1.5" fill="none"/></svg>
<div class="t" style="left:532.20px;top:750.11px;font-size:10.5px;line-height:10.5px;color:#7a7a7a;-webkit-text-stroke:0.15px #7a7a7a;transform:scaleX(0.9716);">Customers - Name</div>
<div class="t" style="left:660.00px;top:750.11px;font-size:10.5px;line-height:10.5px;color:#7a7a7a;-webkit-text-stroke:0.15px #7a7a7a;transform:scaleX(1.0221);">Amount</div>
<div class="r" style="left:530.5px;top:763px;width:183px;height:2px;background:#bde6f8"></div>
<div class="r" style="left:716px;top:751px;width:4px;height:15px;background:#d8d8d8"></div>
<div class="t" style="left:719.00px;top:753.50px;font-size:6.5px;line-height:6.5px;color:#8a8a8a;transform:scaleX(1.0748);">Amount by City</div>
</body></html>
